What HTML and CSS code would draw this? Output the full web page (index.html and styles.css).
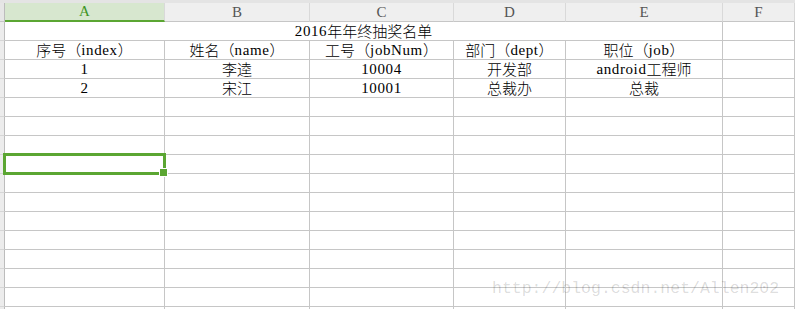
FILE: index.html
```html
<!DOCTYPE html>
<html lang="zh-CN">
<head>
    <meta charset="UTF-8">
    <title>2016年年终抽奖名单</title>
    <link rel="stylesheet" href="styles.css">
</head>
<body>
<div class="sheet">
    <div class="topbar"></div>
    <!-- 列标题 -->
    <div class="row head">
        <span class="gut"></span>
        <span class="on">A</span><span>B</span><span>C</span><span>D</span><span>E</span><span>F</span>
    </div>
    <!-- 合并单元格 A1:E1 -->
    <div class="row">
        <span class="gut"></span>
        <span class="merge"><span class="en">2016</span>年年终抽奖名单</span>
        <span></span>
    </div>
    <div class="row">
        <span class="gut"></span>
        <span>序号（<span class="en">index</span>）</span>
        <span>姓名（<span class="en">name</span>）</span>
        <span>工号（<span class="en">jobNum</span>）</span>
        <span>部门（<span class="en">dept</span>）</span>
        <span>职位（<span class="en">job</span>）</span>
        <span></span>
    </div>
    <div class="row">
        <span class="gut"></span>
        <span><span class="en">1</span></span>
        <span>李逵</span>
        <span><span class="en">10004</span></span>
        <span>开发部</span>
        <span><span class="en">android</span>工程师</span>
        <span></span>
    </div>
    <div class="row">
        <span class="gut"></span>
        <span><span class="en">2</span></span>
        <span>宋江</span>
        <span><span class="en">10001</span></span>
        <span>总裁办</span>
        <span>总裁</span>
        <span></span>
    </div>
    <div class="row"><span class="gut"></span><span></span><span></span><span></span><span></span><span></span><span></span></div>
    <div class="row"><span class="gut"></span><span></span><span></span><span></span><span></span><span></span><span></span></div>
    <div class="row"><span class="gut"></span><span></span><span></span><span></span><span></span><span></span><span></span></div>
    <div class="row"><span class="gut"></span><span></span><span></span><span></span><span></span><span></span><span></span></div>
    <div class="row"><span class="gut"></span><span></span><span></span><span></span><span></span><span></span><span></span></div>
    <div class="row"><span class="gut"></span><span></span><span></span><span></span><span></span><span></span><span></span></div>
    <div class="row"><span class="gut"></span><span></span><span></span><span></span><span></span><span></span><span></span></div>
    <div class="row"><span class="gut"></span><span></span><span></span><span></span><span></span><span></span><span></span></div>
    <div class="row"><span class="gut"></span><span></span><span></span><span></span><span></span><span></span><span></span></div>
    <div class="row"><span class="gut"></span><span></span><span></span><span></span><span></span><span></span><span></span></div>
    <div class="row"><span class="gut"></span><span></span><span></span><span></span><span></span><span></span><span></span></div>
    <div class="row"><span class="gut"></span><span></span><span></span><span></span><span></span><span></span><span></span></div>

    <!-- 当前选中单元格 A8 -->
    <div class="sel"></div>
    <div class="mark">http://blog.csdn.net/Allen202</div>
</div>
</body>
</html>
```

FILE: styles.css
```css
*{box-sizing:border-box;}
body{margin:0;background:#fff;color:#000;font:300 15px/18px "Noto Sans CJK SC",sans-serif;overflow:hidden;}
.sheet{position:relative;width:795px;height:309px;overflow:hidden;}
.topbar{height:3px;background:#e4e4e4;}

.row{display:grid;grid-template-columns:5px 160px 145px 144px 112px 157px 72px;height:19px;}
.row>span{display:flex;align-items:center;justify-content:center;white-space:nowrap;border-right:1px solid #c6c6c6;border-bottom:1px solid #c6c6c6;}
.row>.merge{grid-column:span 5;}
.row>.gut{background:#ececec;border-right-color:#bcbcbc;border-bottom-color:#d6d6d6;}
.en{font-family:"Liberation Serif",serif;font-weight:400;font-size:15px;letter-spacing:.6px;}

.head>span{background:#efefef;color:#555;font:400 15px "Liberation Serif",serif;border-right-color:#d9d9d9;}
.head>.on{background:#d7e7cf;color:#3f9524;border-bottom:2px solid #5ba632;}
.head>.gut{background:#e6e6e6;border-right-color:#bcbcbc;border-bottom-color:#c6c6c6;}

.sel{position:absolute;left:3px;top:153px;width:163px;height:22px;border:3px solid #5ba632;}
.sel:after{content:"";position:absolute;right:-5px;bottom:-5px;width:7px;height:7px;background:#5ba632;border:1px solid #fff;}

.mark{position:absolute;left:492px;top:279px;font:16.5px/20px "Liberation Mono",monospace;color:rgba(0,0,0,.15);}
```
